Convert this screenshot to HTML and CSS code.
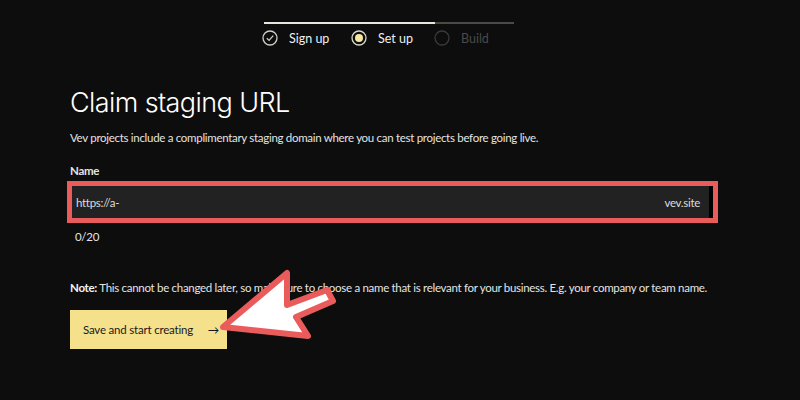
FILE: index.html
```html
<!DOCTYPE html>
<html>

<head>
    <title>Claim staging URL</title>
    <link rel="stylesheet" href="styles.css">
</head>

<body>
    <div class="steps">
        <div class="progress">
            <div class="progress-done"></div>
        </div>
        <div class="step-list">
            <div class="step">
                <svg class="step-icon" width="16" height="16" viewBox="0 0 16 16">
                    <circle cx="8" cy="8" r="7" fill="none" stroke="#cfcfc4" stroke-width="1.3"/>
                    <path d="M4.8 8.2 L7.1 10.4 L11.2 5.6" fill="none" stroke="#cfcfc4" stroke-width="1.3"/>
                </svg>
                <span>Sign up</span>
            </div>
            <div class="step">
                <svg class="step-icon" width="16" height="16" viewBox="0 0 16 16">
                    <circle cx="8" cy="8" r="7" fill="none" stroke="#d8d8cc" stroke-width="1.3"/>
                    <circle cx="8" cy="8" r="4" fill="#f6e7a0"/>
                </svg>
                <span>Set up</span>
            </div>
            <div class="step step-todo">
                <svg class="step-icon" width="16" height="16" viewBox="0 0 16 16">
                    <circle cx="8" cy="8" r="7" fill="none" stroke="#3a3a3a" stroke-width="1.3"/>
                </svg>
                <span>Build</span>
            </div>
        </div>
    </div>

    <div class="container">
        <h1>Claim staging URL</h1>
        <p class="intro">Vev projects include a complimentary staging domain where you can test projects before going live.</p>

        <label class="field-label">Name</label>
        <div class="highlight-box">
            <div class="url-input">
                <span>https://a-</span>
                <span>vev.site</span>
            </div>
        </div>
        <div class="counter">0/20</div>

        <p class="note"><strong>Note:</strong> This cannot be changed later, so make sure to choose a name that is relevant for your business. E.g. your company or team name.</p>

        <button type="button" class="save-button">Save and start creating <span class="arrow">&rarr;</span></button>
    </div>

    <!-- callout arrow pointing at the button -->
    <svg class="callout" width="800" height="400" viewBox="0 0 800 400">
        <polygon points="223,327 287,273 287,305 327,290 333,301 296,317 308,336"
            fill="#ffffff" stroke="#ea5c5c" stroke-width="6" stroke-linejoin="round"/>
    </svg>
</body>

</html>
```

FILE: styles.css
```css
body {
    font-family: Lato, "Open Sans", sans-serif;
    margin: 0;
    padding: 0;
    background-color: #0d0d0d;
    color: #e4e4e4;
    width: 800px;
    height: 400px;
    overflow: hidden;
    position: relative;
}

.steps {
    width: 250px;
    margin-left: 264px;
    padding-top: 22px;
}

.progress {
    height: 2px;
    background-color: #4a4a46;
}

.progress-done {
    width: 171px;
    height: 2px;
    background-color: #e6e6dc;
}

.step-list {
    display: flex;
    margin-top: 5px;
    margin-left: -2px;
}

.step {
    display: flex;
    align-items: center;
    gap: 11px;
    font-size: 12.5px;
    color: #f0f0f0;
    height: 18px;
}

.step:nth-child(1) {
    width: 89px;
}

.step:nth-child(2) {
    width: 83px;
}

.step-todo {
    color: #4a4a4a;
}

.step-icon {
    display: block;
}

.container {
    padding: 0 70px;
    font-size: 11.5px;
    letter-spacing: -0.3px;
}

h1 {
    font-family: Inter, "Liberation Sans", sans-serif;
    font-weight: 300;
    font-size: 27px;
    color: #ffffff;
    margin: 39px 0 0;
    letter-spacing: -0.6px;
}

.intro {
    margin: 12px 0 0;
}

.field-label {
    display: block;
    font-weight: bold;
    margin-top: 20px;
}

.highlight-box {
    margin: 4px 12px 0 -3px;
    border: 5px solid #ea5c5c;
    background-color: #000000;
    padding: 0 4px 0 0;
}

.url-input {
    display: flex;
    justify-content: space-between;
    align-items: center;
    height: 32px;
    background-color: #222222;
    padding: 0 9px 0 4px;
    color: #dcdcdc;
}

.counter {
    margin: 7px 0 0 5px;
}

.note {
    margin: 38px 0 0;
    white-space: nowrap;
}

.note strong {
    color: #f2f2f2;
}

.save-button {
    margin-top: 16px;
    height: 39px;
    width: 157px;
    padding: 0 0 0 13px;
    text-align: left;
    white-space: nowrap;
    background-color: #f5e08c;
    color: #1a1a1a;
    border: none;
    font-family: Lato, "Open Sans", sans-serif;
    font-size: 11.5px;
    letter-spacing: -0.2px;
    cursor: pointer;
}

.save-button .arrow {
    margin-left: 12px;
}

.callout {
    position: absolute;
    left: 0;
    top: 0;
    pointer-events: none;
}
```
